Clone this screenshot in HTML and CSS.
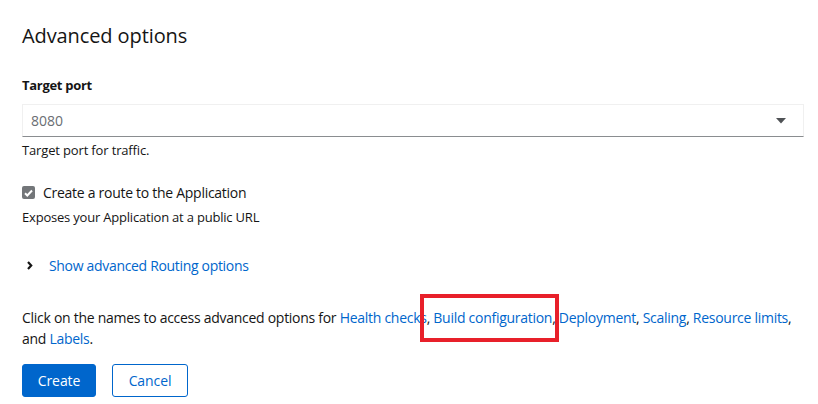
FILE: index.html
```html
<!DOCTYPE html>
<html lang="en">
<head>
<meta charset="utf-8">
<title>Advanced options</title>
<link rel="stylesheet" href="styles.css">
</head>
<body>
<div class="page">
  <h2 class="title">Advanced options</h2>

  <div class="field">
    <label class="label">Target port</label>
    <div class="select">
      <span class="select-value">8080</span>
      <svg class="caret" width="10" height="6" viewBox="0 0 10 6"><path d="M0 0h10L5 5.5z" fill="#4f5255"/></svg>
    </div>
    <div class="helper">Target port for traffic.</div>
  </div>

  <div class="check-row">
    <span class="checkbox">
      <svg width="9" height="8" viewBox="0 0 9 8"><path d="M1 4.2l2.3 2.3L8 1.5" fill="none" stroke="#fff" stroke-width="2"/></svg>
    </span>
    <span class="check-label">Create a route to the Application</span>
  </div>
  <div class="check-desc">Exposes your Application at a public URL</div>

  <div class="expander">
    <svg class="chev" width="6" height="9" viewBox="0 0 6 9"><path d="M1 1l3.2 3.5L1 8" fill="none" stroke="#151515" stroke-width="2.2"/></svg>
    <a class="link">Show advanced Routing options</a>
  </div>

  <p class="para">Click on the names to access advanced options for <a class="link">Health checks</a>, <a class="link">Build configuration</a>, <a class="link">Deployment</a>, <a class="link">Scaling</a>, <a class="link">Resource limits</a>, and <a class="link">Labels</a>.</p>

  <div class="actions">
    <button class="btn btn-primary">Create</button>
    <button class="btn btn-secondary">Cancel</button>
  </div>

  <div class="highlight"></div>
</div>
</body>
</html>
```

FILE: styles.css
```css
* { box-sizing: border-box; }
html, body { margin: 0; padding: 0; background: #fff; }
body {
  font-family: "Open Sans", "Liberation Sans", sans-serif;
  font-size: 14px;
  letter-spacing: -0.28px;
  color: #151515;
}
.page {
  position: relative;
  width: 818px;
  height: 404px;
  padding: 21px 14px 0 22px;
}
.title {
  margin: 0;
  font-size: 20px;
  font-weight: 400;
  letter-spacing: -0.1px;
  line-height: 30px;
}
.field { margin-top: 23px; }
.label {
  display: block;
  padding-top: 1px;
  font-size: 13px;
  font-weight: 700;
  letter-spacing: -0.3px;
  line-height: 21px;
}
.select {
  margin-top: 8px;
  height: 33px;
  border: 1px solid #f0f0f0;
  border-bottom-color: #8a8d90;
  display: flex;
  align-items: center;
  justify-content: space-between;
  padding: 0 17px 0 8px;
}
.select-value { color: #6a6e73; font-size: 14px; letter-spacing: 0; }
.helper {
  margin-top: 3px;
  font-size: 13px;
  letter-spacing: -0.15px;
  line-height: 20px;
}
.check-row {
  margin-top: 22px;
  display: flex;
  align-items: center;
  height: 21px;
}
.checkbox {
  width: 13px;
  height: 13px;
  border-radius: 2px;
  background: #737679;
  display: flex;
  align-items: center;
  justify-content: center;
  margin-right: 8px;
}
.check-desc {
  margin-top: 4px;
  font-size: 13px;
  letter-spacing: -0.2px;
  line-height: 21px;
}
.expander {
  margin-top: 27px;
  display: flex;
  align-items: center;
  height: 21px;
}
.chev { margin: 0 16px 0 5px; }
.link { color: #0066cc; text-decoration: none; }
.expander .link { letter-spacing: -0.32px; }
.para {
  margin: 31px 0 0;
  line-height: 21px;
}
.actions {
  margin-top: 15px;
  display: flex;
  gap: 16px;
}
.btn {
  font-family: inherit;
  font-size: 14px;
  letter-spacing: -0.1px;
  height: 33px;
  border-radius: 3px;
  padding: 0;
  cursor: pointer;
}
.btn-primary {
  background: #0066cc;
  color: #fff;
  border: 1px solid #0066cc;
  width: 74px;
}
.btn-secondary {
  background: #fff;
  color: #0066cc;
  border: 1px solid #0066cc;
  width: 76px;
}
.highlight {
  position: absolute;
  left: 420px;
  top: 294px;
  width: 139px;
  height: 48px;
  border: 4px solid #e8202a;
}
```
